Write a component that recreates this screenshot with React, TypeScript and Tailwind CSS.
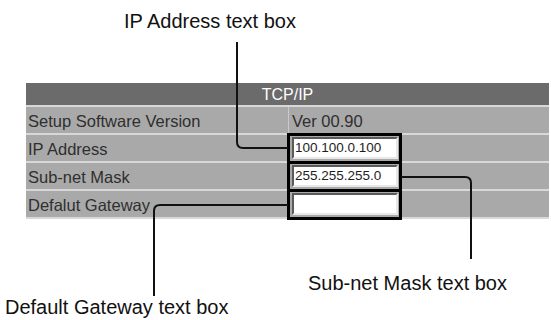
import React from 'react';

type Row = {
  label: string;
  value?: string;
  input?: string;
};

const rows: Row[] = [
  { label: 'Setup Software Version', value: 'Ver 00.90' },
  { label: 'IP Address', input: '100.100.0.100' },
  { label: 'Sub-net Mask', input: '255.255.255.0' },
  { label: 'Defalut Gateway', input: '' },
];

// sunken text field, old-style browser form
const TextBox: React.FC<{ value: string }> = ({ value }) => (
  <div className="w-[106px] h-[22px] bg-white border-2 border-t-[#5a5a5a] border-l-[#5a5a5a] border-b-[#e8e8e8] border-r-[#e8e8e8] flex items-center pl-[1px] text-[13.5px] text-[#1e1e1e] leading-none">
    {value}
  </div>
);

const Callouts: React.FC = () => (
  <svg className="absolute inset-0 pointer-events-none" width={551} height={320} fill="none" stroke="#111" strokeWidth={2}>
    {/* IP Address */}
    <path d="M237 42 V142 Q237 148 243 148 H288" />
    {/* Sub-net Mask */}
    <path d="M401 177 H465 Q471 177 471 183 V259" />
    {/* Default Gateway */}
    <path d="M288 205 H160 Q154 205 154 211 V296" />
  </svg>
);

export default function App() {
  return (
    <div className="relative w-[551px] h-[320px] bg-white overflow-hidden font-['Liberation_Sans',Arial,sans-serif]">
      <div className="pt-[83px] pl-[26px]">
        <div className="w-[523px]">
          <div className="h-[22px] bg-[#6b6b6b] flex items-center justify-center text-white text-[16px] leading-none pt-[2px]">
            TCP/IP
          </div>
          {rows.map((row, i) => (
            <div
              key={row.label}
              className={`flex h-[28px] bg-[#a9a9a9] border-t-2 border-[#d8d8d8] ${i === rows.length - 1 ? 'h-[30px] border-b-2' : ''}`}
            >
              <div className="w-[263px] border-r border-[#c9c9c9] flex items-center pl-[2px] pt-[3px] text-[16.5px] text-[#2f2f2f] leading-none">
                {row.label}
              </div>
              <div className="flex-1 flex items-center pl-[3px] text-[16.5px] text-[#2f2f2f] leading-none">
                {row.input !== undefined ? <TextBox value={row.input} /> : <span className="pt-[3px]">{row.value}</span>}
              </div>
            </div>
          ))}
        </div>
      </div>

      {/* annotation frame round the three text boxes */}
      <div className="absolute left-[287px] top-[133px] w-[115px] h-[87px] border-[3px] border-black flex flex-col">
        <div className="flex-1" />
        <div className="flex-1 border-t-[3px] border-black" />
        <div className="flex-1 border-t-[3px] border-black" />
      </div>

      <Callouts />

      <div className="absolute left-[124px] top-[11px] text-[20px] leading-none text-[#111]">IP Address text box</div>
      <div className="absolute left-[308px] top-[273px] text-[20px] leading-none text-[#111]">Sub-net Mask text box</div>
      <div className="absolute left-[5px] top-[297px] text-[20px] leading-none text-[#111]">Default Gateway text box</div>
    </div>
  );
}
